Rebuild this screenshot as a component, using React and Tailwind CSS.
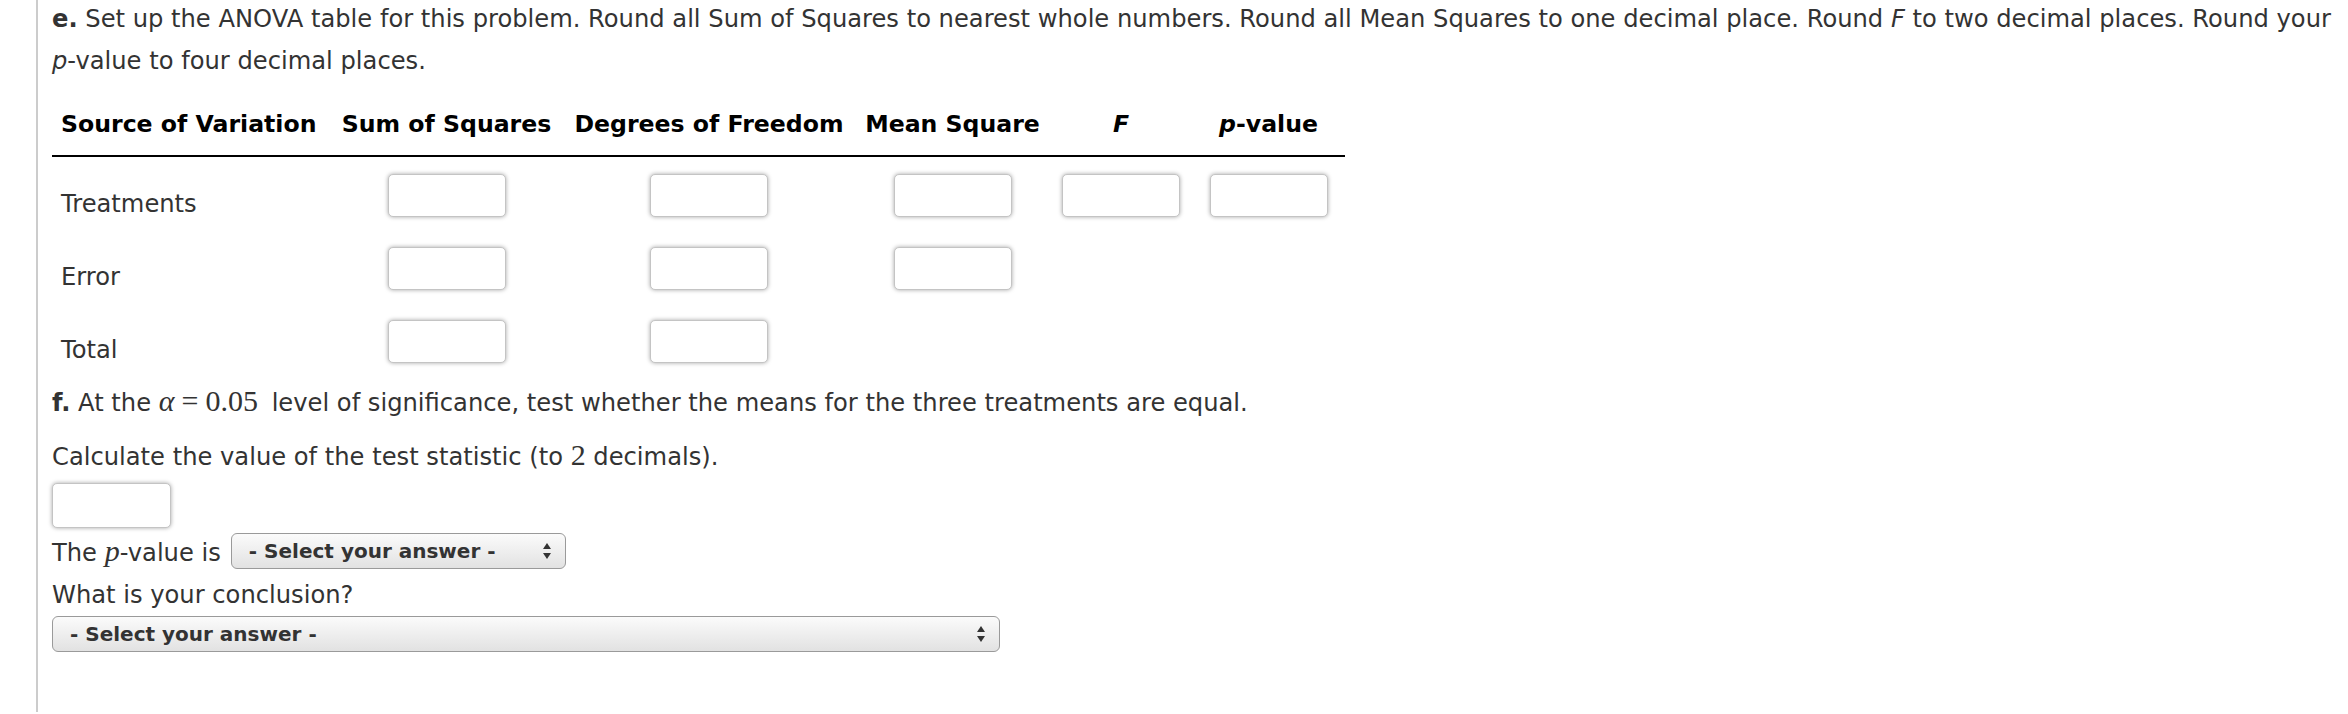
import React from "react";

const sans = "font-['DejaVu_Sans',Verdana,sans-serif]";
const math = "font-['Liberation_Serif',serif]";

function Box({ className = "" }) {
    return (
        <div className={`h-[43px] w-[118px] rounded-[5px] border border-[#c4c4c4] bg-white shadow-[0_0_4px_rgba(0,0,0,0.35)] ${className}`} />
    );
}

function Arrows() {
    return (
        <svg width="10" height="18" viewBox="0 0 10 18" className="shrink-0">
            <path d="M5 1 L9 7 L1 7 Z" fill="#333" />
            <path d="M5 17 L9 11 L1 11 Z" fill="#333" />
        </svg>
    );
}

function Select({ className = "" }) {
    return (
        <div className={`flex items-center justify-between rounded-[6px] border border-[#9a9a9a] bg-gradient-to-b from-[#fbfbfb] to-[#e2e2e2] pl-[17px] pr-[13px] text-[20px] font-bold text-[#333] ${className}`}>
            <span>- Select your answer -</span>
            <Arrows />
        </div>
    );
}

export default function App() {

    const rows = [
        { label: "Treatments", cells: [true, true, true, true, true] },
        { label: "Error", cells: [true, true, true, false, false] },
        { label: "Total", cells: [true, true, false, false, false] },
    ];

    const widths = ["w-[278px]", "w-[233px]", "w-[292px]", "w-[195px]", "w-[142px]", "w-[153px]"];

    return (
        <div className={`${sans} h-[714px] w-full overflow-hidden bg-white text-[24.2px] text-[#333]`}>
            <div className="ml-[36px] h-full border-l-2 border-[#cccccc] pl-[14px]">

                {/* Part e */}
                <p className="-mt-[2px] whitespace-nowrap leading-[42px]">
                    <b>e.</b> Set up the ANOVA table for this problem. Round all Sum of Squares to nearest whole numbers. Round all Mean Squares to one decimal place. Round <i>F</i> to two decimal places. Round your<br />
                    <i>p</i>-value to four decimal places.
                </p>

                <table className="mt-[28px] border-collapse text-[23.6px]">
                    <thead>
                        <tr className="border-b-2 border-black text-black">
                            <th className={`${widths[0]} pb-[17px] pl-[9px] text-left leading-[28px]`}>Source of Variation</th>
                            <th className={`${widths[1]} pb-[17px] leading-[28px]`}>Sum of Squares</th>
                            <th className={`${widths[2]} pb-[17px] leading-[28px]`}>Degrees of Freedom</th>
                            <th className={`${widths[3]} pb-[17px] leading-[28px]`}>Mean Square</th>
                            <th className={`${widths[4]} pb-[17px] leading-[28px]`}><i>F</i></th>
                            <th className={`${widths[5]} pb-[17px] leading-[28px]`}><i>p</i>-value</th>
                        </tr>
                    </thead>
                    <tbody>
                        {rows.map((row) => (
                            <tr key={row.label}>
                                <td className="pl-[9px] pt-[22px] align-middle text-[24.2px]">{row.label}</td>
                                {row.cells.map((on, i) => (
                                    <td key={i} className="pb-[13px] pt-[17px] align-middle">
                                        {on && <Box className="mx-auto" />}
                                    </td>
                                ))}
                            </tr>
                        ))}
                    </tbody>
                </table>

                {/* Part f */}
                <p className="mt-[4px] leading-[42px]">
                    <b>f.</b> At the <span className={`${math} text-[30px] italic`}>α</span>
                    <span className={`${math} mx-[7px] text-[30px]`}>=</span>
                    <span className={`${math} mr-[6px] text-[30px]`}>0.05</span> level of significance, test whether the means for the three treatments are equal.
                </p>

                <p className="mt-[10px] leading-[42px]">
                    Calculate the value of the test statistic (to <span className={`${math} text-[30px]`}>2</span> decimals).
                </p>

                <div className="mt-[5px] h-[45px] w-[119px] rounded-[5px] border border-[#c4c4c4] bg-white shadow-[0_0_4px_rgba(0,0,0,0.35)]" />

                <div className="mt-0 flex items-center gap-[10px]">
                    <span>The <span className={`${math} text-[30px] italic`}>p</span>-value is</span>
                    <Select className="h-[36px] w-[335px]" />
                </div>

                <p className="mt-[1px] leading-[42px]">What is your conclusion?</p>

                <Select className="h-[36px] w-[948px]" />

            </div>
        </div>
    );
}
